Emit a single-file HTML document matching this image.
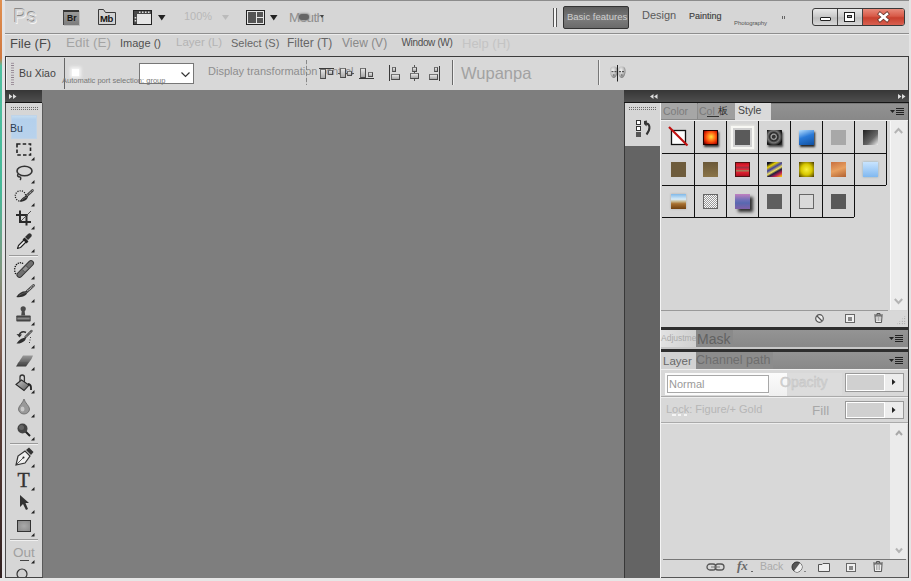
<!DOCTYPE html>
<html><head><meta charset="utf-8">
<style>
*{margin:0;padding:0;box-sizing:border-box}
html,body{width:911px;height:581px;overflow:hidden;background:#d6d6d6;font-family:"Liberation Sans",sans-serif}
.a{position:absolute}
.t{position:absolute;white-space:nowrap;line-height:1}
svg{position:absolute;overflow:visible}
</style></head><body>
<!-- desktop edge -->
<div class="a" style="left:0;top:0;width:2px;height:581px;background:linear-gradient(#e09050 0,#d07840 58px,#50c0a0 66px,#48b898 190px,#809880 270px,#907060 320px,#604038 400px,#302020 581px)"></div>
<div class="a" style="left:2px;top:0;width:3px;height:581px;background:#e4e4e6"></div>
<!-- window top border -->
<div class="a" style="left:5px;top:0;width:904px;height:1px;background:#8c8c8c"></div>
<div class="a" style="left:909px;top:0;width:2px;height:581px;background:#e4e4e4"></div>
<div class="a" style="left:0;top:578px;width:911px;height:3px;background:#e6e6e6"></div>

<!-- title/menu separator -->
<div class="a" style="left:5px;top:33px;width:904px;height:1px;background:#8e8e8e"></div>
<div class="a" style="left:5px;top:34px;width:904px;height:1px;background:#ececec"></div>

<!-- ===== TITLE BAR ===== -->
<div class="t" style="left:13.5px;top:7px;font-size:19.5px;color:#d2d2d2;text-shadow:-0.8px -0.8px 0.3px #8a8a8a,0.8px 0.8px 0.5px #f4f4f4;letter-spacing:0.5px">Ps</div>
<!-- Br -->
<div class="a" style="left:63px;top:10px;width:16px;height:15px;background:linear-gradient(#9a9a9a,#7c7c7c);border-top:2px solid #333;border-left:1px solid #444;box-shadow:1px 1px 0 #bbb"></div>
<div class="t" style="left:67px;top:14px;font-size:8.5px;font-weight:bold;color:#151515">Br</div>
<!-- Mb -->
<svg style="left:98px;top:9px" width="18" height="16"><path d="M0.5 15.5V0.5H5.5L7.5 3.5H17.5V15.5Z" fill="#d2d2d2" stroke="#3a3a3a" stroke-width="1"/></svg>
<div class="t" style="left:100px;top:13.5px;font-size:9.5px;font-weight:bold;color:#151515;letter-spacing:-0.3px">Mb</div>
<!-- film icon -->
<svg style="left:133px;top:10px" width="20" height="16"><rect x="0.5" y="0.5" width="18" height="14" fill="#e6e6e6" stroke="#222" stroke-width="1"/><rect x="1" y="1" width="17" height="3" fill="#4a4a4a"/><rect x="1" y="1" width="3" height="13" fill="#4a4a4a"/><g fill="#e0e0e0"><rect x="6" y="1.5" width="1.5" height="1.5"/><rect x="9" y="1.5" width="1.5" height="1.5"/><rect x="12" y="1.5" width="1.5" height="1.5"/><rect x="15" y="1.5" width="1.5" height="1.5"/><rect x="1.7" y="7" width="1.5" height="1.5"/><rect x="1.7" y="10" width="1.5" height="1.5"/></g></svg>
<svg style="left:158px;top:15px" width="8" height="6"><path d="M0 0H7.5L3.75 5.5Z" fill="#222"/></svg>
<div class="t" style="left:184px;top:11px;font-size:11px;color:#b8b8b8">100%</div>
<svg style="left:222px;top:15px" width="8" height="6"><path d="M0 0H7L3.5 5Z" fill="#bbb"/></svg>
<!-- layout icon -->
<svg style="left:246px;top:10px" width="19" height="15"><rect x="0.5" y="0.5" width="18" height="14" fill="#e8e8e8" stroke="#222"/><rect x="2" y="2" width="8" height="11" fill="#555"/><rect x="11" y="2" width="6" height="5" fill="#555"/><rect x="11" y="8" width="6" height="5" fill="#555"/></svg>
<svg style="left:270px;top:15px" width="8" height="6"><path d="M0 0H7.5L3.75 5.5Z" fill="#222"/></svg>
<div class="t" style="left:289px;top:10.5px;font-size:13.5px;color:#8e8e8e;letter-spacing:-0.6px">Mouth</div>
<div class="a" style="left:299px;top:14px;width:10px;height:6px;background:#666;border-radius:3px;box-shadow:0 0 2px 1px #999"></div><svg style="left:320px;top:15px" width="4" height="3"><path d="M0 0H4L2 3Z" fill="#444"/></svg>

<!-- separator + workspace -->
<div class="a" style="left:553px;top:8px;width:1px;height:19px;background:#555"></div>
<div class="a" style="left:554px;top:8px;width:2px;height:19px;background:#f4f4f4"></div>
<div class="a" style="left:556px;top:8px;width:1px;height:19px;background:#555"></div>
<div class="a" style="left:563px;top:6px;width:66px;height:23px;background:linear-gradient(#5e5e5e,#7a7a7a 60%,#6a6a6a);border:1px solid #333;border-radius:2px"></div>
<div class="t" style="left:567px;top:12px;font-size:9.5px;color:#cfcfcf">Basic features</div>
<div class="t" style="left:642px;top:10px;font-size:11px;color:#5a5a5a">Design</div>
<div class="t" style="left:689px;top:12px;font-size:9px;color:#404040;-webkit-text-stroke:0.15px #404040">Painting</div>
<div class="t" style="left:734px;top:20px;font-size:6px;color:#555;letter-spacing:-0.1px">Photography</div>
<div class="a" style="left:782px;top:15.5px;width:1px;height:3px;background:#666"></div><div class="a" style="left:784px;top:15.5px;width:1px;height:3px;background:#666"></div>

<!-- window buttons -->
<div class="a" style="left:812px;top:8px;width:93px;height:18px;border:1px solid #3a3a3a;border-radius:3px;background:linear-gradient(#e8e8e8,#c8c8c8 50%,#bdbdbd 55%,#d8d8d8);overflow:hidden">
  <div class="a" style="left:24px;top:0;width:1px;height:16px;background:#444"></div>
  <div class="a" style="left:49px;top:0;width:1px;height:16px;background:#444"></div>
  <div class="a" style="left:50px;top:0;width:42px;height:16px;background:linear-gradient(#e88a7a,#d85a48 45%,#c8402e 55%,#d86050)"></div>
  <div class="a" style="left:7px;top:8px;width:11px;height:4px;background:#fff;border:1px solid #222;border-radius:1px"></div>
  <div class="a" style="left:31px;top:3px;width:11px;height:10px;background:#fff;border:1px solid #222"></div>
  <div class="a" style="left:34px;top:6px;width:5px;height:3px;background:#999;border:1px solid #222"></div>
  <svg style="left:65px;top:3px" width="11" height="10"><path d="M2 2L9 8M9 2L2 8" stroke="#6a3a30" stroke-width="4.2" stroke-linecap="square"/><path d="M2 2L9 8M9 2L2 8" stroke="#fff" stroke-width="2.6" stroke-linecap="square"/></svg>
</div>

<!-- ===== MENU ===== -->
<div class="t" style="left:10px;top:37px;font-size:13px;color:#4a4a4a">File (F)</div>
<div class="t" style="left:66px;top:35.5px;font-size:13.5px;color:#a4a4a4">Edit (E)</div>
<div class="t" style="left:120px;top:38px;font-size:11px;color:#505050">Image ()</div>
<div class="t" style="left:176px;top:37px;font-size:11.5px;color:#b4b4b4">Layer (L)</div>
<div class="t" style="left:231px;top:38px;font-size:11px;color:#666">Select (S)</div>
<div class="t" style="left:287px;top:37px;font-size:12px;color:#666">Filter (T)</div>
<div class="t" style="left:342px;top:37px;font-size:12px;color:#8a8a8a">View (V)</div>
<div class="t" style="left:401.5px;top:38px;font-size:10px;color:#505050;letter-spacing:-0.35px">Window (W)</div>
<div class="t" style="left:462px;top:36.5px;font-size:13px;color:#c4c4c4">Help (H)</div>

<!-- ===== OPTIONS BAR ===== -->
<div class="a" style="left:5px;top:56px;width:904px;height:34px;background:#d8d8d8;border-top:1px solid #3c3c3c;border-left:1px solid #3c3c3c;border-right:1px solid #3c3c3c"></div>
<div class="a" style="left:6px;top:57px;width:1px;height:33px;background:#f0f0f0"></div>
<div class="a" style="left:11px;top:62px;width:3px;height:23px;background:radial-gradient(circle,#8a7a88 0.6px,transparent 0.8px) 0 0/1.6px 2.4px"></div>
<div class="t" style="left:19px;top:68px;font-size:10.5px;color:#444">Bu Xiao</div>
<div class="a" style="left:64px;top:58px;width:1px;height:31px;background:#666"></div>
<div class="a" style="left:72px;top:69px;width:7px;height:7px;background:#fff;box-shadow:0 0 3px 2px #f4f4f4"></div>
<div class="a" style="left:139px;top:63px;width:55px;height:21px;background:#fff;border:1px solid #777"></div>
<svg style="left:181px;top:72px" width="9" height="6"><path d="M0.5 0.5L4.5 4.5L8.5 0.5" fill="none" stroke="#333" stroke-width="1.2"/></svg>
<div class="t" style="left:62px;top:77px;font-size:7.5px;color:#777">Automatic port selection: group</div>
<div class="t" style="left:208px;top:66px;font-size:11px;color:#8e8e8e">Display transformation control</div>
<div class="a" style="left:306px;top:60px;width:1px;height:25px;background:repeating-linear-gradient(#888 0 4px,#c8c8c8 4px 6px)"></div>
<!-- align icons -->
<div class="a" style="left:319px;top:68px;width:15px;height:1px;background:#3a3a3a"></div><div class="a" style="left:320px;top:69px;width:6px;height:10px;background:linear-gradient(#e6e6e6,#a8a8a8);border:1px solid #4a4a4a;border-top-color:#777;border-left-color:#666"></div><div class="a" style="left:328px;top:70px;width:5px;height:5px;background:linear-gradient(#e6e6e6,#a8a8a8);border:1px solid #4a4a4a;border-top-color:#777;border-left-color:#666"></div>
<div class="a" style="left:338px;top:73px;width:16px;height:1px;background:#555"></div><div class="a" style="left:340px;top:68px;width:6px;height:10px;background:linear-gradient(#e6e6e6,#a8a8a8);border:1px solid #4a4a4a;border-top-color:#777;border-left-color:#666"></div><div class="a" style="left:347px;top:71px;width:5px;height:5px;background:linear-gradient(#e6e6e6,#a8a8a8);border:1px solid #4a4a4a;border-top-color:#777;border-left-color:#666"></div>
<div class="a" style="left:359px;top:78px;width:15px;height:1px;background:#3a3a3a"></div><div class="a" style="left:360px;top:68px;width:6px;height:10px;background:linear-gradient(#e6e6e6,#a8a8a8);border:1px solid #4a4a4a;border-top-color:#777;border-left-color:#666"></div><div class="a" style="left:368px;top:72px;width:5px;height:5px;background:linear-gradient(#e6e6e6,#a8a8a8);border:1px solid #4a4a4a;border-top-color:#777;border-left-color:#666"></div>
<div class="a" style="left:389px;top:65px;width:1px;height:16px;background:#3a3a3a"></div><div class="a" style="left:392px;top:67px;width:4px;height:5px;background:linear-gradient(#e6e6e6,#a8a8a8);border:1px solid #4a4a4a;border-top-color:#777;border-left-color:#666"></div><div class="a" style="left:391px;top:74px;width:9px;height:6px;background:linear-gradient(#e6e6e6,#a8a8a8);border:1px solid #4a4a4a;border-top-color:#777;border-left-color:#666"></div>
<div class="a" style="left:414px;top:65px;width:1px;height:16px;background:#555"></div><div class="a" style="left:412px;top:67px;width:5px;height:5px;background:linear-gradient(#e6e6e6,#a8a8a8);border:1px solid #4a4a4a;border-top-color:#777;border-left-color:#666"></div><div class="a" style="left:410px;top:73px;width:9px;height:6px;background:linear-gradient(#e6e6e6,#a8a8a8);border:1px solid #4a4a4a;border-top-color:#777;border-left-color:#666"></div>
<div class="a" style="left:439px;top:66px;width:1px;height:15px;background:#3a3a3a"></div><div class="a" style="left:434px;top:67px;width:4px;height:5px;background:linear-gradient(#e6e6e6,#a8a8a8);border:1px solid #4a4a4a;border-top-color:#777;border-left-color:#666"></div><div class="a" style="left:429px;top:74px;width:9px;height:6px;background:linear-gradient(#e6e6e6,#a8a8a8);border:1px solid #4a4a4a;border-top-color:#777;border-left-color:#666"></div>
<div class="a" style="left:452px;top:60px;width:1px;height:25px;background:#6a6a6a"></div><div class="a" style="left:453px;top:60px;width:1px;height:25px;background:#eee"></div>
<div class="t" style="left:461px;top:64.5px;font-size:16.5px;color:#a2a2a2">Wupanpa</div>
<div class="a" style="left:598px;top:60px;width:1px;height:25px;background:#777"></div><div class="a" style="left:599px;top:60px;width:1px;height:25px;background:#eee"></div>
<!-- mask icon -->
<svg style="left:609px;top:65px" width="18" height="17">
<defs><radialGradient id="fg" cx="40%" cy="35%" r="70%"><stop offset="0" stop-color="#f4f4f4"/><stop offset="0.6" stop-color="#b8b8b8"/><stop offset="1" stop-color="#6a6a6a"/></radialGradient></defs>
<path d="M1 6C1 2 3 1.5 5 1.5C7 1.5 8.5 2.5 8.5 6C8.5 10 6.5 13 4.8 13C3 13 1 10 1 6Z" fill="url(#fg)"/>
<path d="M9 6C9 2.5 10.5 1.5 12.5 1.5C14.5 1.5 16.5 2 16.5 6C16.5 10 14.5 13 12.7 13C11 13 9 10 9 6Z" fill="url(#fg)"/>
<g fill="#555"><rect x="2.5" y="6" width="2" height="1.2"/><rect x="5.5" y="6" width="2" height="1.2"/><rect x="10" y="6" width="2" height="1.2"/><rect x="13" y="6" width="2" height="1.2"/><rect x="4" y="9.5" width="1.5" height="1"/><rect x="12" y="9.5" width="1.5" height="1"/></g>
<path d="M8.5 0V16.5" stroke="#222" stroke-width="1"/></svg>
<!-- dark header strips -->
<div class="a" style="left:5px;top:90px;width:38px;height:13px;background:linear-gradient(#363636,#4e4e4e);border-bottom:1px solid #151515"></div>
<svg style="left:9px;top:94px" width="8" height="6"><path d="M0 0L3.5 2.5L0 5ZM4 0L7.5 2.5L4 5Z" fill="#ddd"/></svg>
<div class="a" style="left:624px;top:90px;width:285px;height:13px;background:linear-gradient(#363636,#4e4e4e);border-bottom:1px solid #151515"></div>
<svg style="left:650px;top:94px" width="8" height="6"><path d="M3.5 0L0 2.5L3.5 5ZM7.5 0L4 2.5L7.5 5Z" fill="#ddd"/></svg>
<svg style="left:898px;top:94px" width="8" height="6"><path d="M0 0L3.5 2.5L0 5ZM4 0L7.5 2.5L4 5Z" fill="#ddd"/></svg>

<!-- canvas -->
<div class="a" style="left:42px;top:90px;width:582px;height:488px;background:#7e7e7e"></div>

<!-- tool panel -->
<div class="a" id="tools" style="left:5px;top:103px;width:38px;height:475px;background:#d6d6d6;border-left:1px solid #4a4a4a;border-right:1px solid #5a5a5a;border-bottom:1px solid #444"></div>


<!-- ===== TOOLS ===== -->
<svg style="left:11px;top:107px" width="28" height="3"><g fill="#6a6a6a"><rect x="0" y="0" width="1" height="1"/><rect x="0" y="2" width="1" height="1"/><rect x="2" y="0" width="1" height="1"/><rect x="2" y="2" width="1" height="1"/><rect x="4" y="0" width="1" height="1"/><rect x="4" y="2" width="1" height="1"/><rect x="6" y="0" width="1" height="1"/><rect x="6" y="2" width="1" height="1"/><rect x="8" y="0" width="1" height="1"/><rect x="8" y="2" width="1" height="1"/><rect x="10" y="0" width="1" height="1"/><rect x="10" y="2" width="1" height="1"/><rect x="12" y="0" width="1" height="1"/><rect x="12" y="2" width="1" height="1"/><rect x="14" y="0" width="1" height="1"/><rect x="14" y="2" width="1" height="1"/><rect x="16" y="0" width="1" height="1"/><rect x="16" y="2" width="1" height="1"/><rect x="18" y="0" width="1" height="1"/><rect x="18" y="2" width="1" height="1"/><rect x="20" y="0" width="1" height="1"/><rect x="20" y="2" width="1" height="1"/><rect x="22" y="0" width="1" height="1"/><rect x="22" y="2" width="1" height="1"/><rect x="24" y="0" width="1" height="1"/><rect x="24" y="2" width="1" height="1"/><rect x="26" y="0" width="1" height="1"/><rect x="26" y="2" width="1" height="1"/></g></svg>
<div class="a" style="left:11px;top:115px;width:26px;height:24px;background:linear-gradient(#c4dcf0,#b4d0ec 15%,#b8d2ec);border:1px solid #c0d4e8"></div>
<div class="t" style="left:10px;top:123px;font-size:10.5px;color:#2c3e52">Bu</div>
<!-- marquee -->
<svg style="left:16px;top:143px" width="16" height="13"><rect x="1" y="1" width="13.5" height="11" fill="none" stroke="#222" stroke-width="1.6" stroke-dasharray="3.5 2.2"/></svg>
<!-- lasso -->
<svg style="left:15px;top:165px" width="18" height="16"><ellipse cx="9.5" cy="6" rx="7.5" ry="4.8" fill="none" stroke="#333" stroke-width="1.6"/><path d="M3 9C2 11 3 12 5 12C6 12 6 14 5 15" fill="none" stroke="#333" stroke-width="1.5"/></svg>
<!-- quick select -->
<svg style="left:15px;top:189px" width="19" height="15"><circle cx="5.5" cy="7" r="5.2" fill="none" stroke="#222" stroke-width="1.3" stroke-dasharray="1.1 1.2"/><path d="M17.5 1.5L11.5 7" stroke="#444" stroke-width="2.6" stroke-linecap="round"/><path d="M17.5 1.5L11.5 7" stroke="#ddd" stroke-width="1" stroke-dasharray="1 1"/><path d="M4.5 12.5C7 8.5 10 6.5 13 7C13 10 10 13 4.5 12.5Z" fill="#2a2a2a"/><path d="M7 11C9 9 11 8 12 8" stroke="#888" stroke-width="0.6" fill="none"/></svg>
<!-- crop -->
<svg style="left:16px;top:210px" width="16" height="16"><g fill="#2a2a2a"><rect x="3" y="0.5" width="2" height="12.5"/><rect x="0" y="4" width="11.5" height="2"/><rect x="9.5" y="4" width="2" height="11.5"/><rect x="3" y="11" width="12" height="2"/></g><path d="M5 11L15 1" stroke="#444" stroke-width="0.9"/></svg>
<!-- eyedropper -->
<svg style="left:16px;top:233px" width="17" height="17"><path d="M1.5 15.5L2.5 12.5L9 6L11 8L4.5 14.5Z" fill="#f4f4f4" stroke="#222" stroke-width="1.1" stroke-linejoin="round"/><path d="M7.5 5.5L11.5 9.5" stroke="#222" stroke-width="2.6"/><path d="M10 5L12 7L15 4C16 3 16 1.5 15 1C14.5 0 13 0 12 1L9 4Z" fill="#333"/></svg>
<div class="a" style="left:9px;top:255px;width:29px;height:1px;background:#9a9a9a"></div>
<div class="a" style="left:9px;top:256px;width:29px;height:1px;background:#f0f0f0"></div>
<!-- healing -->
<svg style="left:14px;top:260px" width="20" height="18"><g fill="#1a1a1a"><circle cx="1.5" cy="13.5" r="0.8"/><circle cx="0.8" cy="11.2" r="0.8"/><circle cx="0.7" cy="8.8" r="0.8"/><circle cx="1.3" cy="6.5" r="0.8"/><circle cx="2.5" cy="4.6" r="0.8"/><circle cx="4.3" cy="3.3" r="0.8"/><circle cx="6.4" cy="2.8" r="0.8"/><circle cx="8.5" cy="3.3" r="0.8"/></g><path d="M5.5 14.8L17 3.2" stroke="#333" stroke-width="6" stroke-linecap="round"/><path d="M5.5 14.8L17 3.2" stroke="#707070" stroke-width="4.2" stroke-linecap="round"/><path d="M9.5 10.8L13 7.2" stroke="#929292" stroke-width="3"/><path d="M8.3 9.5L11 12.3M12 5.5L14.7 8.3" stroke="#444" stroke-width="0.7"/></svg>
<!-- brush -->
<svg style="left:16px;top:284px" width="19" height="15"><path d="M17.5 1.5L11 7.5" stroke="#444" stroke-width="2.8" stroke-linecap="round"/><path d="M17.5 1.5L11 7.5" stroke="#d8d8d8" stroke-width="1.1" stroke-dasharray="1 0.8"/><path d="M0.3 13C3 8.5 7.5 6.5 11.5 7.5C11.5 11 6.5 14 0.3 13Z" fill="#2e2e2e"/><path d="M3 11.5C6 9.5 9 8.5 11 8.5" stroke="#777" stroke-width="0.6" fill="none"/></svg>
<!-- stamp -->
<svg style="left:16px;top:306px" width="15" height="16"><circle cx="7.2" cy="2.8" r="2.6" fill="#4a4a4a"/><path d="M5.8 4.5H8.6L9.2 9.5H5.2Z" fill="#4a4a4a"/><rect x="0.3" y="9.5" width="14.4" height="6" rx="0.8" fill="#444"/><rect x="1.3" y="11.5" width="12.4" height="2" fill="#888"/></svg>
<!-- history brush -->
<svg style="left:16px;top:330px" width="17" height="15"><path d="M10 2.5C7 1 4.5 2 3 5" fill="none" stroke="#333" stroke-width="1.6"/><path d="M0.5 4L3.5 7.5L6 4.5Z" fill="#333"/><path d="M15.5 1L9.5 7" stroke="#444" stroke-width="2.4" stroke-linecap="round"/><path d="M15.5 1L9.5 7" stroke="#ddd" stroke-width="0.9" stroke-dasharray="1 0.8"/><path d="M0.5 13.5C3 9.5 6.5 7.5 10 7.5C10 10.5 6 14 0.5 13.5Z" fill="#2e2e2e"/><g fill="#444"><rect x="14" y="7" width="1" height="1"/><rect x="13.5" y="9.5" width="1" height="1"/><rect x="13" y="12" width="1" height="1"/></g></svg>
<!-- eraser -->
<svg style="left:15px;top:354px" width="19" height="14"><defs><linearGradient id="er" x1="0" y1="0" x2="0" y2="1"><stop offset="0" stop-color="#9a9a9a"/><stop offset="0.55" stop-color="#6a6a6a"/><stop offset="1" stop-color="#3a3a3a"/></linearGradient></defs><path d="M1 12.5L8 1.5H18L16.5 5L11 12.5Z" fill="url(#er)"/><path d="M2.5 10L3.5 8.5H13L11.8 10Z" fill="#555"/></svg>
<!-- bucket -->
<svg style="left:15px;top:374px" width="18" height="18"><defs><linearGradient id="bk" x1="0" y1="0" x2="1" y2="1"><stop offset="0" stop-color="#c8c8c8"/><stop offset="1" stop-color="#5a5a5a"/></linearGradient></defs><path d="M5 7V3.2A2.2 2.2 0 0 1 9.4 3.2V8.5" fill="none" stroke="#333" stroke-width="1.3"/><path d="M1 10.5L6.5 6L14 11L9 16.5Z" fill="url(#bk)" stroke="#2a2a2a" stroke-width="1.1"/><path d="M13 10Q16 10.5 16 13.5V16" stroke="#222" stroke-width="1.8" fill="none"/></svg>
<!-- blur drop -->
<svg style="left:18px;top:399px" width="12" height="15"><path d="M6 0C5 4 0.5 7 0.5 10A5.5 5 0 0 0 11.5 10C11.5 7 7 4 6 0Z" fill="#999" stroke="#666" stroke-width="0.8"/><ellipse cx="4.5" cy="10" rx="2" ry="2.5" fill="#c8c8c8"/></svg>
<!-- dodge -->
<svg style="left:17px;top:423px" width="14" height="14"><path d="M7 7L13 13" stroke="#222" stroke-width="2"/><circle cx="5.5" cy="5.5" r="5" fill="#444"/><circle cx="4.5" cy="4.5" r="2.5" fill="#666"/></svg>
<div class="a" style="left:10px;top:443px;width:28px;height:1px;background:#9a9a9a"></div>
<div class="a" style="left:10px;top:444px;width:28px;height:1px;background:#f0f0f0"></div>
<!-- pen -->
<svg style="left:15px;top:447px" width="19" height="19"><path d="M1 18L3 9L10 4L15 9L10 16Z" fill="#f0f0f0" stroke="#333" stroke-width="1.2"/><path d="M1 18L8 11" stroke="#333" stroke-width="0.8"/><circle cx="8.5" cy="10.5" r="1" fill="#222"/><path d="M11 3L14 0.5L18.5 5L16 8Z" fill="#333"/></svg>
<div class="t" style="left:17.5px;top:469.5px;font-size:20px;color:#333;font-family:'Liberation Serif',serif;-webkit-text-stroke:0.4px #333">T</div>
<!-- arrow -->
<svg style="left:19px;top:494px" width="11" height="17"><path d="M1 1V13L4 10L7 16L9 15L6.5 9H10Z" fill="#333"/></svg>
<!-- rect -->
<div class="a" style="left:17px;top:520px;width:14px;height:12px;background:radial-gradient(#aaa,#8a8a8a);border:1px solid #333"></div>
<div class="a" style="left:10px;top:539px;width:28px;height:1px;background:#9a9a9a"></div>
<div class="a" style="left:10px;top:540px;width:28px;height:1px;background:#f0f0f0"></div>
<div class="t" style="left:13px;top:546px;font-size:13.5px;color:#a0a0a0">Out</div>
<div class="a" style="left:20px;top:560px;width:9px;height:1px;background:#444"></div>
<svg style="left:16px;top:568px" width="13" height="9"><circle cx="6" cy="6" r="5" fill="#d0d0d0" stroke="#333" stroke-width="1.2"/></svg><div class="a" style="left:5px;top:577px;width:38px;height:1px;background:#444"></div><div class="a" style="left:5px;top:578px;width:904px;height:3px;background:#e6e6e6"></div>
<svg style="left:31px;top:157px" width="4" height="4"><path d="M3.5 0V3.5H0Z" fill="#222"/></svg>
<svg style="left:31px;top:180px" width="4" height="4"><path d="M3.5 0V3.5H0Z" fill="#222"/></svg>
<svg style="left:31px;top:203px" width="4" height="4"><path d="M3.5 0V3.5H0Z" fill="#222"/></svg>
<svg style="left:31px;top:226px" width="4" height="4"><path d="M3.5 0V3.5H0Z" fill="#222"/></svg>
<svg style="left:31px;top:249px" width="4" height="4"><path d="M3.5 0V3.5H0Z" fill="#222"/></svg>
<svg style="left:31px;top:276px" width="4" height="4"><path d="M3.5 0V3.5H0Z" fill="#222"/></svg>
<svg style="left:31px;top:299px" width="4" height="4"><path d="M3.5 0V3.5H0Z" fill="#222"/></svg>
<svg style="left:31px;top:322px" width="4" height="4"><path d="M3.5 0V3.5H0Z" fill="#222"/></svg>
<svg style="left:31px;top:345px" width="4" height="4"><path d="M3.5 0V3.5H0Z" fill="#222"/></svg>
<svg style="left:31px;top:367px" width="4" height="4"><path d="M3.5 0V3.5H0Z" fill="#222"/></svg>
<svg style="left:31px;top:390px" width="4" height="4"><path d="M3.5 0V3.5H0Z" fill="#222"/></svg>
<svg style="left:31px;top:414px" width="4" height="4"><path d="M3.5 0V3.5H0Z" fill="#222"/></svg>
<svg style="left:31px;top:437px" width="4" height="4"><path d="M3.5 0V3.5H0Z" fill="#222"/></svg>
<svg style="left:31px;top:464px" width="4" height="4"><path d="M3.5 0V3.5H0Z" fill="#222"/></svg>
<svg style="left:31px;top:487px" width="4" height="4"><path d="M3.5 0V3.5H0Z" fill="#222"/></svg>
<svg style="left:31px;top:510px" width="4" height="4"><path d="M3.5 0V3.5H0Z" fill="#222"/></svg>
<svg style="left:31px;top:533px" width="4" height="4"><path d="M3.5 0V3.5H0Z" fill="#222"/></svg>
<svg style="left:31px;top:560px" width="4" height="4"><path d="M3.5 0V3.5H0Z" fill="#222"/></svg>

<!-- dock column -->
<div class="a" style="left:624px;top:103px;width:37px;height:475px;background:#646464"></div><div class="a" style="left:660px;top:103px;width:1px;height:475px;background:#f4f4f4"></div>
<div class="a" style="left:625px;top:103px;width:35px;height:43px;background:#d6d6d6"></div>

<div class="a" style="left:624px;top:103px;width:1px;height:475px;background:#383838"></div>
<!-- right panels -->
<div class="a" style="left:661px;top:103px;width:248px;height:475px;background:#d6d6d6"></div>


<!-- history icon -->
<svg style="left:629px;top:107px" width="28" height="3"><g fill="#6a6a6a"><rect x="0" y="0" width="1" height="1"/><rect x="0" y="2" width="1" height="1"/><rect x="2" y="0" width="1" height="1"/><rect x="2" y="2" width="1" height="1"/><rect x="4" y="0" width="1" height="1"/><rect x="4" y="2" width="1" height="1"/><rect x="6" y="0" width="1" height="1"/><rect x="6" y="2" width="1" height="1"/><rect x="8" y="0" width="1" height="1"/><rect x="8" y="2" width="1" height="1"/><rect x="10" y="0" width="1" height="1"/><rect x="10" y="2" width="1" height="1"/><rect x="12" y="0" width="1" height="1"/><rect x="12" y="2" width="1" height="1"/><rect x="14" y="0" width="1" height="1"/><rect x="14" y="2" width="1" height="1"/><rect x="16" y="0" width="1" height="1"/><rect x="16" y="2" width="1" height="1"/><rect x="18" y="0" width="1" height="1"/><rect x="18" y="2" width="1" height="1"/><rect x="20" y="0" width="1" height="1"/><rect x="20" y="2" width="1" height="1"/><rect x="22" y="0" width="1" height="1"/><rect x="22" y="2" width="1" height="1"/><rect x="24" y="0" width="1" height="1"/><rect x="24" y="2" width="1" height="1"/><rect x="26" y="0" width="1" height="1"/><rect x="26" y="2" width="1" height="1"/></g></svg>
<svg style="left:636px;top:120px" width="16" height="18"><rect x="0.5" y="0.5" width="4" height="4" fill="#fff" stroke="#333"/><rect x="0.5" y="6.5" width="4" height="4" fill="#fff" stroke="#333"/><rect x="0" y="12" width="5" height="5" fill="#555"/><path d="M10 3.5C14 3.5 15 9 10.5 14.5" fill="none" stroke="#333" stroke-width="2"/><path d="M8 1L11 0.5L10.5 6.5L8 4Z" fill="#333"/></svg>

<!-- ===== STYLE PANEL ===== -->
<div class="a" style="left:661px;top:103px;width:247px;height:17px;background:linear-gradient(#929292,#888);border-top:1px solid #7a7a7a"></div>
<div class="a" style="left:661px;top:103px;width:36px;height:16px;background:#a6a6a6"></div>
<div class="t" style="left:663px;top:105.5px;font-size:10.5px;color:#7c7c7c">Color</div>
<div class="a" style="left:698px;top:103px;width:37px;height:16px;background:#9e9e9e"></div>
<div class="t" style="left:699px;top:105.5px;font-size:10.5px;color:#7a7a7a">Col</div><div class="t" style="left:718px;top:106px;font-size:10px;color:#2a2a2a">板</div><div class="a" style="left:707px;top:116px;width:12px;height:1px;background:#333"></div>
<div class="a" style="left:735px;top:103px;width:36px;height:17px;background:#dadada"></div>
<div class="t" style="left:738px;top:105px;font-size:10.5px;color:#444">Style</div>
<svg style="left:890px;top:108px" width="15" height="8"><path d="M0 2H5L2.5 5Z" fill="#222"/><path d="M6 0.5H14M6 2.5H14M6 4.5H14M6 6.5H14" stroke="#222" stroke-width="1"/></svg>
<div class="a" style="left:661px;top:120px;width:247px;height:1px;background:#efefef"></div>
<!-- scrollbar -->
<div class="a" style="left:890px;top:121px;width:17px;height:189px;background:#ececec;border-left:1px solid #f8f8f8"></div>
<svg style="left:894px;top:127px" width="9" height="7"><path d="M0.8 6L4.5 2L8.2 6" fill="none" stroke="#b4b4b4" stroke-width="2"/></svg>
<svg style="left:894px;top:298px" width="9" height="7"><path d="M0.8 1L4.5 5L8.2 1" fill="none" stroke="#b4b4b4" stroke-width="2"/></svg>
<div class="a" style="left:661px;top:310px;width:227px;height:1px;background:#999"></div>
<div class="a" style="left:661px;top:311px;width:247px;height:16px;background:#d8d8d8"></div>
<!-- footer icons -->
<svg style="left:815px;top:314px" width="9" height="9"><circle cx="4.5" cy="4.5" r="3.8" fill="#eee" stroke="#555" stroke-width="1.2"/><path d="M2 2L7 7" stroke="#555" stroke-width="1.2"/></svg>
<svg style="left:845px;top:314px" width="10" height="9"><rect x="0.5" y="0.5" width="9" height="8" fill="#f0f0f0" stroke="#666"/><rect x="3" y="3" width="4" height="4" fill="#888"/></svg>
<svg style="left:874px;top:313px" width="9" height="10"><path d="M0 2H9M3 2V0.5H6V2" stroke="#555" fill="none"/><path d="M1 3H8L7.5 9.5H1.5Z" fill="#eee" stroke="#555"/><path d="M3 4V8M4.5 4V8M6 4V8" stroke="#888" stroke-width="0.6"/></svg>
<div class="a" style="left:896px;top:315px;width:10px;height:10px;background:radial-gradient(circle,#888 0.6px,transparent 0.8px) 0 0/2.5px 2.5px;clip-path:polygon(100% 0,100% 100%,0 100%)"></div>
<div class="a" style="left:661px;top:327px;width:247px;height:3px;background:#2e2e2e"></div>

<!-- adjustments/mask bar -->
<div class="a" style="left:661px;top:330px;width:247px;height:17px;background:linear-gradient(#949494,#888)"></div>
<div class="a" style="left:661px;top:330px;width:35px;height:17px;background:linear-gradient(90deg,#e2e2e2,#d0d0d0)"></div>
<div class="t" style="left:661px;top:333.5px;font-size:8.5px;color:#aaa">Adjustme</div>
<div class="a" style="left:696px;top:330px;width:37px;height:16px;background:#8a8a8a"></div>
<div class="t" style="left:697px;top:332px;font-size:14px;color:#626262">Mask</div>
<svg style="left:889px;top:335px" width="15" height="8"><path d="M0 2H5L2.5 5Z" fill="#222"/><path d="M6 0.5H14M6 2.5H14M6 4.5H14M6 6.5H14" stroke="#222" stroke-width="1"/></svg>
<div class="a" style="left:661px;top:347px;width:247px;height:2px;background:#c8c8c8"></div>
<div class="a" style="left:661px;top:349px;width:247px;height:3px;background:#2e2e2e"></div>

<!-- layers bar -->
<div class="a" style="left:661px;top:352px;width:247px;height:17px;background:linear-gradient(#949494,#888)"></div>
<div class="a" style="left:661px;top:352px;width:35px;height:17px;background:#d2d2d2"></div>
<div class="t" style="left:663px;top:355.5px;font-size:11.5px;color:#686868">Layer</div>
<div class="a" style="left:696px;top:352px;width:77px;height:17px;background:#8c8c8c"></div>
<div class="t" style="left:696px;top:353.5px;font-size:12.5px;color:#6e6e6e">Channel path</div>
<svg style="left:889px;top:357px" width="15" height="8"><path d="M0 2H5L2.5 5Z" fill="#222"/><path d="M6 0.5H14M6 2.5H14M6 4.5H14M6 6.5H14" stroke="#222" stroke-width="1"/></svg>
<div class="a" style="left:661px;top:369px;width:247px;height:1px;background:#eee"></div>
<div class="a" style="left:661px;top:370px;width:247px;height:207px;background:#d8d8d8"></div>
<div class="a" style="left:665px;top:373px;width:106px;height:22px;background:#fbfbfb"></div><div class="a" style="left:667px;top:375px;width:102px;height:18px;background:#fff;border:1px solid #a8a8a8"></div>
<div class="a" style="left:769px;top:373px;width:18px;height:23px;background:linear-gradient(#fbfbfb,#f0f0f0)"></div>
<div class="t" style="left:669px;top:379px;font-size:11px;color:#9a9a9a">Normal</div>
<div class="a" style="left:787px;top:373px;width:55px;height:22px;background:#dcdcdc"></div><div class="t" style="left:780px;top:375px;font-size:14px;color:#d4d4d4;-webkit-text-stroke:0.4px #c0c0c0">Opacity</div>
<div class="a" style="left:845px;top:373px;width:59px;height:19px;border:1px solid #999;background:#ececec"></div>
<div class="a" style="left:846px;top:374px;width:39px;height:17px;background:#d0d0d0;border:1px solid #fff"></div>
<svg style="left:892px;top:379px" width="4" height="6"><path d="M0 0L3.5 3L0 6Z" fill="#222"/></svg>
<div class="a" style="left:661px;top:396px;width:247px;height:1px;background:#aaa"></div>
<div class="a" style="left:661px;top:397px;width:247px;height:1px;background:#eee"></div>
<div class="t" style="left:666px;top:404px;font-size:11px;color:#b6b6b6">Lock: Figure/+ Gold</div><div class="a" style="left:672px;top:414px;width:4px;height:2px;background:#f4f4f4"></div><div class="a" style="left:678px;top:414px;width:3px;height:2px;background:#f4f4f4"></div><div class="a" style="left:684px;top:414px;width:3px;height:2px;background:#f4f4f4"></div>
<div class="t" style="left:812px;top:404px;font-size:13.5px;color:#a8a8a8">Fill</div>
<div class="a" style="left:845px;top:401px;width:59px;height:18px;border:1px solid #999;background:#ececec"></div>
<div class="a" style="left:846px;top:402px;width:39px;height:16px;background:#d0d0d0;border:1px solid #fff"></div>
<svg style="left:892px;top:407px" width="4" height="6"><path d="M0 0L3.5 3L0 6Z" fill="#222"/></svg>
<div class="a" style="left:661px;top:422px;width:247px;height:1px;background:#aaa"></div>
<div class="a" style="left:661px;top:423px;width:247px;height:1px;background:#eee"></div>
<div class="a" style="left:890px;top:424px;width:17px;height:135px;background:#ebebeb"></div>
<svg style="left:895px;top:430px" width="8" height="6"><path d="M1 5L4 1.5L7 5" fill="none" stroke="#a8a8a8" stroke-width="2"/></svg>
<svg style="left:895px;top:547px" width="8" height="7"><path d="M1 1.5L4 5L7 1.5" fill="none" stroke="#b4b4b4" stroke-width="2"/></svg>
<div class="a" style="left:663px;top:559px;width:243px;height:1px;background:#777"></div>
<!-- layer footer icons -->
<svg style="left:706px;top:563px" width="19" height="9"><rect x="1" y="1" width="9" height="6" rx="3" fill="none" stroke="#555" stroke-width="1.3"/><rect x="9" y="1" width="9" height="6" rx="3" fill="none" stroke="#555" stroke-width="1.3"/><path d="M5 4H14" stroke="#777" stroke-width="1"/></svg>
<div class="t" style="left:737px;top:559px;font-size:13px;font-style:italic;font-weight:bold;color:#6a6a6a;font-family:'Liberation Serif',serif">fx</div><div class="a" style="left:751px;top:571px;width:2px;height:1px;background:#666"></div>
<div class="t" style="left:760px;top:561px;font-size:10.5px;color:#aaa">Back</div>
<svg style="left:791px;top:561px" width="16" height="12"><circle cx="6" cy="6" r="5" fill="#555" stroke="#333"/><path d="M9 2A5 5 0 0 1 3 10Z" fill="#eee"/><path d="M13 10H15L14 11Z" fill="#333"/></svg>
<svg style="left:818px;top:563px" width="12" height="9"><path d="M0.5 1.5H4L5 0.5H11.5V8.5H0.5Z" fill="#eee" stroke="#555"/></svg>
<svg style="left:846px;top:563px" width="10" height="9"><rect x="0.5" y="0.5" width="9" height="8" fill="#f0f0f0" stroke="#666"/><rect x="3" y="3" width="4" height="4" fill="#888"/></svg>
<svg style="left:873px;top:561px" width="10" height="11"><path d="M0 2H10M3.5 2V0.5H6.5V2" stroke="#555" fill="none"/><path d="M1 3H9L8.5 10.5H1.5Z" fill="#eee" stroke="#555"/><path d="M3.5 4V9M5 4V9M6.5 4V9" stroke="#888" stroke-width="0.6"/></svg>
<div class="a" style="left:661px;top:577px;width:248px;height:1px;background:#555"></div>
<svg style="left:670px;top:129px" width="17" height="17"><rect x="1.5" y="1.5" width="14" height="14" fill="#fdfdfd" stroke="#111" stroke-width="1.3"/><path d="M-1 -2L17.5 16.5" stroke="#c01010" stroke-width="2.2"/></svg>
<div class="a" style="left:703px;top:130px;width:15px;height:15px;background:radial-gradient(circle at 55% 45%,#ffe040,#ff6010 45%,#d01800 75%,#400);border:1px solid #200;box-shadow:1px 2px 2px #333;"></div>
<div class="a" style="left:735px;top:130px;width:15px;height:15px;background:#5a5a5a;box-shadow:0 0 0 2px #d0d0d0,0 0 0 4px #f8f8f4,0 0 2px 5px #e8e8e4;"></div>
<div class="a" style="left:767px;top:130px;width:15px;height:15px;background:radial-gradient(circle at 45% 45%,#333 0 1.5px,#aaa 2.5px,#222 4px,#777 6px,#111 9px,#444 12px);box-shadow:1px 2px 2px #444;"></div>
<div class="a" style="left:799px;top:130px;width:15px;height:15px;background:linear-gradient(160deg,#b8e0ff,#2a7ad8 45%,#1050a0);box-shadow:1px 2px 2px #222;"></div>
<div class="a" style="left:831px;top:130px;width:15px;height:15px;background:#a8a8a8;"></div>
<div class="a" style="left:863px;top:130px;width:15px;height:15px;background:linear-gradient(135deg,#222,#666 60%,#eee);"></div>
<div class="a" style="left:671px;top:162px;width:15px;height:15px;background:#6e5c3c;"></div>
<div class="a" style="left:703px;top:162px;width:15px;height:15px;background:linear-gradient(#6a5838,#8a7448);"></div>
<div class="a" style="left:735px;top:162px;width:15px;height:15px;background:linear-gradient(#c01020,#e02030 20%,#a03040 35%,#e02838 50%,#909060 60%,#e02030 70%,#b01020);border:1px solid #501010;"></div>
<div class="a" style="left:767px;top:162px;width:15px;height:15px;background:linear-gradient(150deg,#101020 10%,#e8d000 25%,#4040a0 40%,#f0e060 55%,#202040 65%,#c02050 80%,#ffe000);"></div>
<div class="a" style="left:799px;top:162px;width:15px;height:15px;background:radial-gradient(#f8f040,#d8c800 50%,#807000 80%,#403000);"></div>
<div class="a" style="left:831px;top:162px;width:15px;height:15px;background:linear-gradient(160deg,#c87040,#e8a060 50%,#b06030);"></div>
<div class="a" style="left:863px;top:162px;width:15px;height:15px;background:linear-gradient(#c8e4ff,#80b8f0);box-shadow:0 0 2px #8ab;"></div>
<div class="a" style="left:671px;top:194px;width:15px;height:15px;background:linear-gradient(#80b8e8,#d8ecf8 35%,#c8b890 50%,#a87030 65%,#704010);box-shadow:0 0 2px #aaa;"></div>
<div class="a" style="left:703px;top:194px;width:15px;height:15px;background:repeating-conic-gradient(#fafafa 0 25%,#9a9a9a 0 50%) 0 0/2px 2px;border:1px solid #666;"></div>
<div class="a" style="left:735px;top:194px;width:15px;height:15px;background:linear-gradient(#c080c0,#7070b8 40%,#5868b0 60%,#8060a8);box-shadow:3px 3px 3px #333;"></div>
<div class="a" style="left:767px;top:194px;width:15px;height:15px;background:#5e5e5e;"></div>
<div class="a" style="left:799px;top:194px;width:15px;height:15px;background:#d8d8d8;border:1px solid #666;background:#dadada;"></div>
<div class="a" style="left:831px;top:194px;width:15px;height:15px;background:#585858;"></div>
<div class="a" style="left:694px;top:121px;width:1px;height:96px;background:#111"></div>
<div class="a" style="left:726px;top:121px;width:1px;height:96px;background:#111"></div>
<div class="a" style="left:758px;top:121px;width:1px;height:96px;background:#111"></div>
<div class="a" style="left:790px;top:121px;width:1px;height:96px;background:#111"></div>
<div class="a" style="left:822px;top:121px;width:1px;height:96px;background:#111"></div>
<div class="a" style="left:854px;top:121px;width:1px;height:96px;background:#111"></div>
<div class="a" style="left:886px;top:121px;width:1px;height:64px;background:#111"></div>
<div class="a" style="left:662px;top:153px;width:224px;height:1px;background:#111"></div>
<div class="a" style="left:662px;top:185px;width:224px;height:1px;background:#111"></div>
<div class="a" style="left:662px;top:217px;width:192px;height:1px;background:#111"></div>

<div class="a" style="left:908px;top:103px;width:1px;height:475px;background:#3a3a3a"></div>
</body></html>
